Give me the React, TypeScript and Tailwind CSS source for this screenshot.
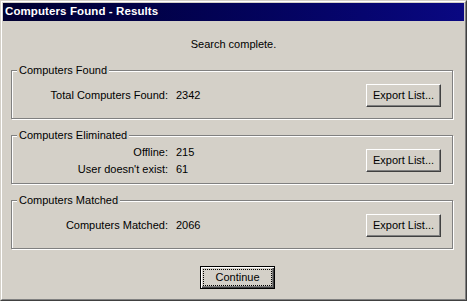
import React from 'react';

const font = { fontFamily: '"Liberation Sans", Arial, sans-serif' };

const ExportButton: React.FC = () => (
  <button
    type="button"
    className="ml-auto mr-[11px] w-[75px] h-[23px] shrink-0 border border-t-white border-l-white border-r-[#404040] border-b-[#404040] bg-[#d4d0c8] shadow-[inset_-1px_-1px_0_#808080] text-[11px] leading-[13px] text-black"
  >
    Export List...
  </button>
);

const GroupBox: React.FC<{ title: string; rows: [string, string][]; first?: boolean }> = ({ title, rows, first }) => (
  <div
    className={`relative ml-[8px] w-[442px] h-[49px] border border-[#808080] shadow-[1px_1px_0_white,inset_1px_1px_0_white] ${first ? 'mt-[19px]' : 'mt-[16px]'}`}
  >
    <span className="absolute left-[5px] -top-[7px] px-[2px] bg-[#d4d0c8] leading-[13px]">{title}</span>
    <div className="pt-[13px] flex items-center h-[36px]">
      <div className="grid grid-cols-[156px_auto] gap-x-[8px] leading-[17px]">
        {rows.map(([label, value]) => (
          <React.Fragment key={label}>
            <span className="text-right">{label}</span>
            <span>{value}</span>
          </React.Fragment>
        ))}
      </div>
      <ExportButton />
    </div>
  </div>
);

export default function App() {
  return (
    <div
      className="w-[467px] h-[301px] border border-t-[#d4d0c8] border-l-[#d4d0c8] border-r-[#404040] border-b-[#404040] bg-[#d4d0c8] text-[11px] text-black"
      style={font}
    >
      <div className="h-full border border-t-white border-l-white border-r-[#808080] border-b-[#808080] p-px flex flex-col">
        <div className="h-[18px] shrink-0 flex items-center pl-[2px] bg-gradient-to-r from-[#000030] to-[#0a0882] text-white text-[11.5px] font-bold tracking-[0.1px]">
          Computers Found - Results
        </div>
        <div className="flex-1 flex flex-col">
          <div className="pt-[17px] text-center leading-[13px]">Search complete.</div>
          <GroupBox first title="Computers Found" rows={[['Total Computers Found:', '2342']]} />
          <GroupBox
            title="Computers Eliminated"
            rows={[
              ['Offline:', '215'],
              ["User doesn't exist:", '61'],
            ]}
          />
          <GroupBox title="Computers Matched" rows={[['Computers Matched:', '2066']]} />
          <button
            type="button"
            className="relative mt-[17px] ml-[197px] w-[75px] h-[23px] border border-black bg-[#d4d0c8] shadow-[inset_1px_1px_0_white,inset_-1px_-1px_0_#404040,inset_-2px_-2px_0_#808080] text-[11px] leading-[13px] text-black"
          >
            <span className="absolute inset-[2px] border border-dotted border-black" />
            Continue
          </button>
        </div>
      </div>
    </div>
  );
}
